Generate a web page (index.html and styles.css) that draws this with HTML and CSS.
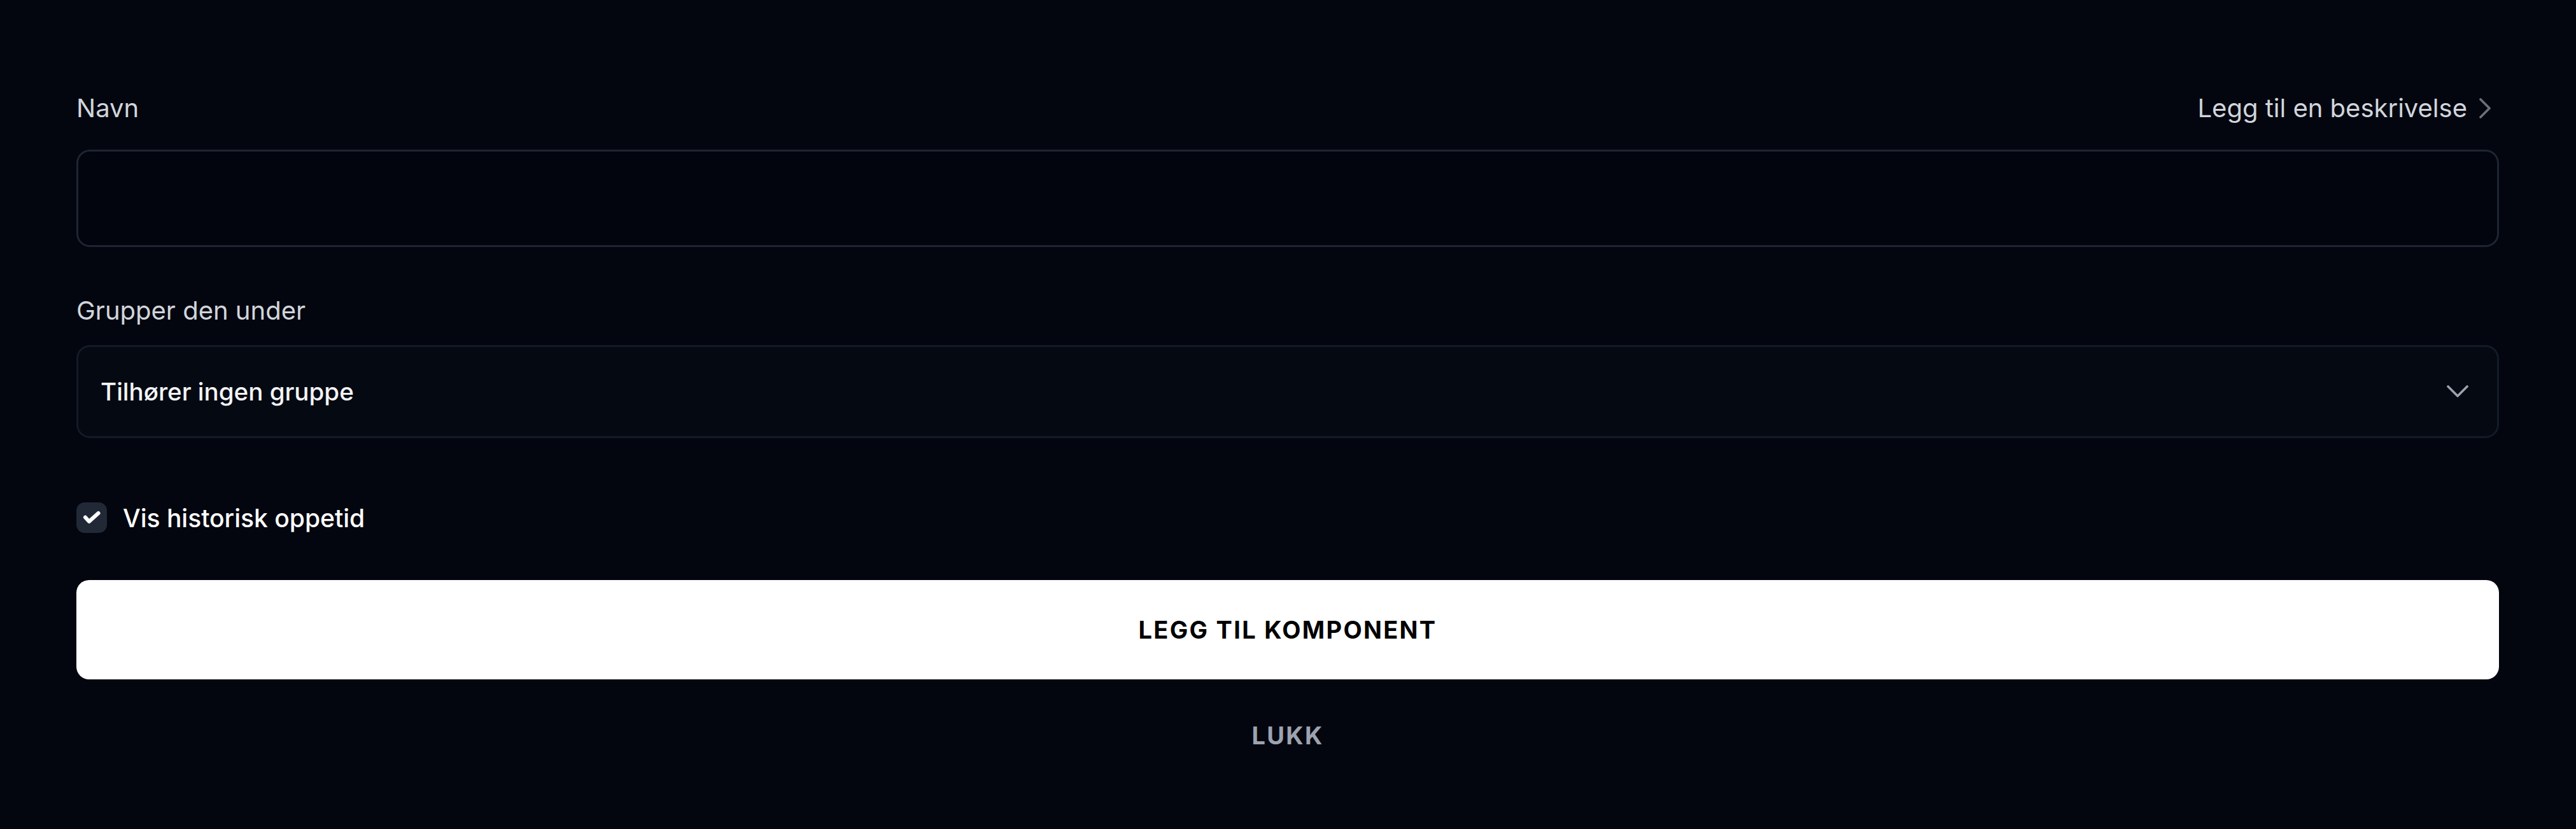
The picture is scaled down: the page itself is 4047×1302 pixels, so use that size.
FILE: index.html
```html
<!DOCTYPE html>
<html lang="no">
<head>
<meta charset="utf-8">
<title>Legg til komponent</title>
<link rel="stylesheet" href="styles.css">
</head>
<body>
<form class="form">
  <div class="field-head">
    <label class="label" for="navn">Navn</label>
    <a class="desc-link" href="#">Legg til en beskrivelse
      <svg class="desc-chevron" width="20" height="34" viewBox="0 0 20 34"><polyline points="3,3 17,17 3,31" fill="none" stroke="currentColor" stroke-width="3.8" stroke-linecap="round" stroke-linejoin="round"/></svg>
    </a>
  </div>
  <input id="navn" class="input" type="text">

  <div class="field-head group-head">
    <label class="label">Grupper den under</label>
  </div>
  <div class="select">
    <span class="select-value">Tilhører ingen gruppe</span>
    <svg class="select-chevron" width="34" height="20" viewBox="0 0 34 20"><polyline points="2,2 17,17 32,2" fill="none" stroke="currentColor" stroke-width="3.6" stroke-linecap="round" stroke-linejoin="round"/></svg>
  </div>

  <div class="check-row">
    <span class="checkbox">
      <svg width="30" height="24" viewBox="0 0 30 24"><polyline points="5,11.5 11,18 25.5,5" fill="none" stroke="#ffffff" stroke-width="6" stroke-linecap="round" stroke-linejoin="round"/></svg>
    </span>
    <span class="check-label">Vis historisk oppetid</span>
  </div>

  <button type="button" class="btn-primary">LEGG TIL KOMPONENT</button>
  <button type="button" class="btn-close">LUKK</button>
</form>
</body>
</html>
```

FILE: styles.css
```css
html, body {
  margin: 0;
  padding: 0;
  background: #03060f;
}

body {
  font-family: Inter, "Noto Sans", "Liberation Sans", sans-serif;
  color: #d1d5db;
}

.form {
  display: flex;
  flex-direction: column;
  padding: 139px 121px 0 120px;
}

.field-head {
  display: flex;
  justify-content: space-between;
  align-items: center;
  height: 62px;
  margin-bottom: 34px;
}

.group-head {
  margin-top: 69px;
  margin-bottom: 23px;
}

.label {
  font-size: 40px;
  line-height: 62px;
  color: #d1d5db;
  font-weight: 400;
}

.desc-link {
  display: flex;
  align-items: center;
  gap: 18px;
  font-size: 40px;
  line-height: 62px;
  color: #d1d5db;
  text-decoration: none;
}

.desc-chevron {
  color: #6b6f7a;
  margin-right: 12px;
}

.input {
  box-sizing: border-box;
  height: 153px;
  width: 100%;
  margin: 0;
  background: #02050d;
  border: 3px solid #1e2532;
  border-radius: 21px;
  outline: none;
  font-family: inherit;
  font-size: 40px;
  color: #f3f4f6;
  padding: 0 36px;
}

.select {
  box-sizing: border-box;
  height: 146px;
  display: flex;
  align-items: center;
  justify-content: space-between;
  background: #050912;
  border: 3px solid #141a26;
  border-radius: 21px;
  padding: 0 45px 0 35px;
}

.select-value {
  font-size: 38.5px;
  font-weight: 500;
  color: #f3f4f6;
}

.select-chevron {
  color: #9ca3af;
}

.check-row {
  display: flex;
  align-items: center;
  gap: 25px;
  margin-top: 101px;
  height: 48px;
}

.checkbox {
  width: 48px;
  height: 48px;
  border-radius: 13px;
  background: #222936;
  display: flex;
  align-items: center;
  justify-content: center;
}

.check-label {
  font-size: 39px;
  font-weight: 500;
  color: #ffffff;
}

.btn-primary {
  margin-top: 74px;
  height: 156px;
  border: none;
  border-radius: 20px;
  background: #ffffff;
  color: #000000;
  font-family: inherit;
  font-size: 38px;
  font-weight: 700;
  letter-spacing: 0.06em;
  cursor: pointer;
}

.btn-close {
  margin-top: 59px;
  align-self: center;
  height: 58px;
  border: none;
  background: transparent;
  color: #9ca3af;
  font-family: inherit;
  font-size: 38px;
  font-weight: 700;
  letter-spacing: 0.06em;
  padding: 0;
  cursor: pointer;
}
```
